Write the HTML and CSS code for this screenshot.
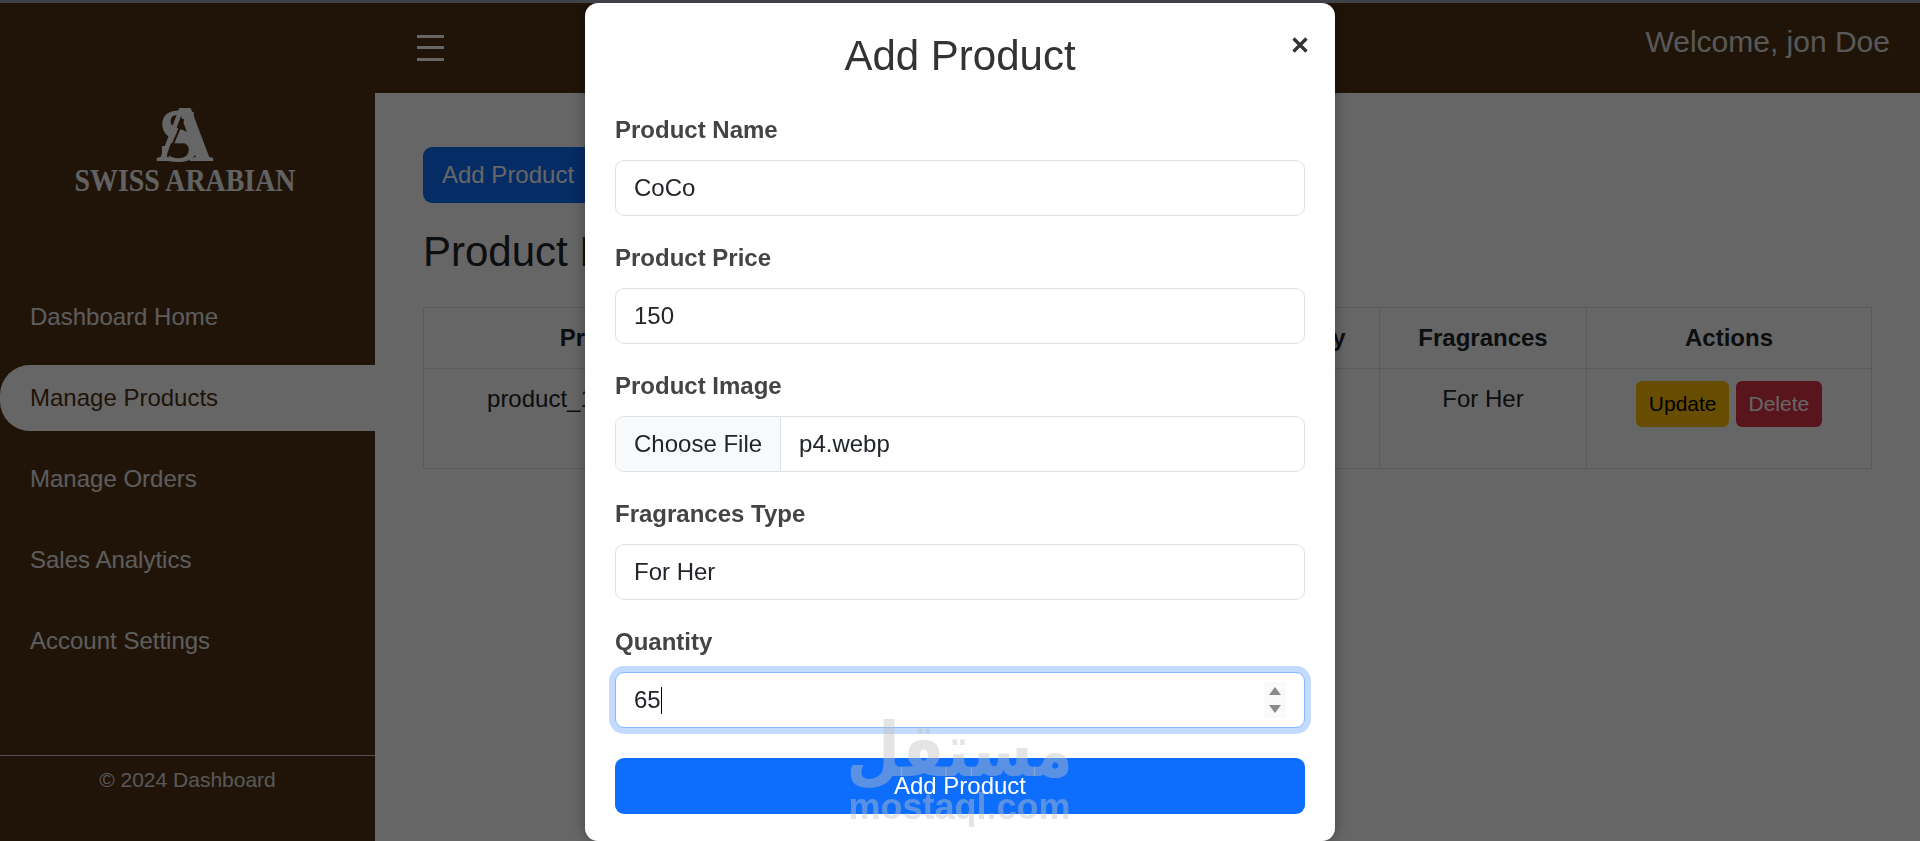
FILE: index.html
```html
<!DOCTYPE html>
<html lang="en">
<head>
<meta charset="utf-8">
<title>Manage Products</title>
<link rel="stylesheet" href="styles.css">
</head>
<body>
<div class="topstrip"></div>
<div class="shell">
  <aside class="sidebar">
    <div class="brand">
      <svg class="brand-logo" viewBox="0 0 240 92" width="240" height="92">
        <text class="mono mono-a" x="91" y="55">A</text>
        <text class="mono mono-s" x="93" y="54.5">S</text>
        <path class="mono-cut" d="M118.5 13 102.5 51"/>
        <text class="brand-name" x="120" y="85" text-anchor="middle" textLength="221" lengthAdjust="spacingAndGlyphs">SWISS ARABIAN</text>
      </svg>
    </div>
    <nav class="nav">
      <a class="nav-item">Dashboard Home</a>
      <a class="nav-item active">Manage Products</a>
      <a class="nav-item">Manage Orders</a>
      <a class="nav-item">Sales Analytics</a>
      <a class="nav-item">Account Settings</a>
    </nav>
    <footer class="side-foot">© 2024 Dashboard</footer>
  </aside>
  <div class="main">
    <header class="topbar">
      <svg class="burger" viewBox="0 0 27 26" width="27" height="26"><rect y="0" width="27" height="3"/><rect y="11" width="27" height="3"/><rect y="23" width="27" height="3"/></svg>
      <span class="welcome">Welcome, jon Doe</span>
    </header>
    <section class="content">
      <button class="btn btn-primary btn-add">Add Product</button>
      <h2 class="page-title">Product List</h2>
      <table class="table">
        <colgroup>
          <col class="c1"><col class="c2"><col class="c3"><col class="c4"><col class="c5"><col class="c6">
        </colgroup>
        <thead>
          <tr><th>Product ID</th><th>Name</th><th>Price</th><th>Quantity</th><th>Fragrances</th><th>Actions</th></tr>
        </thead>
        <tbody>
          <tr>
            <td>product_1732547281473</td><td>CoCo</td><td>150</td><td>65</td><td>For Her</td>
            <td><button class="btn-sm btn-warn">Update</button><button class="btn-sm btn-danger">Delete</button></td>
          </tr>
        </tbody>
      </table>
    </section>
  </div>
</div>
<div class="backdrop"></div>
<div class="modal-layer">
  <div class="modal">
    <button class="close" aria-label="Close"><svg viewBox="0 0 16 16" width="16" height="16"><path d="M1.5 1.5 14.5 14.5M14.5 1.5 1.5 14.5"/></svg></button>
    <h2 class="modal-title">Add Product</h2>
    <form class="form">
      <div class="field"><label class="label">Product Name</label><input class="input" value="CoCo"></div>
      <div class="field"><label class="label">Product Price</label><input class="input" value="150"></div>
      <div class="field"><label class="label">Product Image</label>
        <div class="input file"><span class="file-btn">Choose File</span><span class="file-name">p4.webp</span></div>
      </div>
      <div class="field"><label class="label">Fragrances Type</label><input class="input" value="For Her"></div>
      <div class="field"><label class="label">Quantity</label>
        <div class="input focus"><span>65</span><i class="caret"></i>
          <span class="spin"><i class="tri up"></i><i class="tri down"></i></span>
        </div>
      </div>
      <button type="button" class="btn btn-primary btn-submit"><span class="btn-label">Add Product</span></button>
    </form>
    <div class="watermark"><span class="wm-ar" lang="ar" dir="rtl">مستقل</span><span class="wm-en">mostaql.com</span></div>
  </div>
</div>
</body>
</html>
```
FILE: styles.css
```css
* { box-sizing: border-box; }
html, body { margin: 0; height: 841px; overflow: hidden; }
body { font-family: "Liberation Sans", Arial, sans-serif; font-size: 24px; line-height: 36px; color: #212529; background: #fff; }

.topstrip { height: 3px; background: #3f4347; position: relative; z-index: 5; }
.shell { display: flex; height: 838px; }

.sidebar { width: 375px; flex: none; background: #503214; color: #fff; display: flex; flex-direction: column; }
.brand { height: 281px; padding: 103px 6px 0 0; display: flex; justify-content: center; align-items: flex-start; }
.brand-logo { display: block; overflow: visible; }
.mono { font-family: "Liberation Serif", serif; font-weight: 700; fill: #fff; }
.mono-s { font-size: 76px; }
.mono-a { font-size: 80px; }
.mono-cut { fill: none; stroke: #503214; stroke-width: 2; }
.brand-name { font-family: "Liberation Serif", serif; font-weight: 700; font-size: 31px; fill: #f4f4f4; }

.nav { display: flex; flex-direction: column; gap: 15px; }
.nav-item { display: block; height: 66px; line-height: 66px; padding-left: 30px; color: #e8e8e8; }
.nav-item.active { background: #fff; color: #503214; border-radius: 30px 0 0 30px; }

.side-foot { margin-top: auto; height: 86px; border-top: 1px solid #ccc; padding-top: 8px; text-align: center; font-size: 21px; line-height: 32px; color: #ddd; }

.main { flex: 1; display: flex; flex-direction: column; min-width: 0; }
.topbar { height: 90px; flex: none; background: #503214; display: flex; justify-content: space-between; align-items: flex-start; padding: 0 30px 0 42px; }
.burger { fill: #fff; margin-top: 32px; display: block; }
.welcome { font-size: 30px; line-height: 45px; margin-top: 16px; color: #ddd; }

.content { padding: 54px 49px 0 48px; }
.btn { display: block; font: inherit; border: 0; border-radius: 9px; cursor: pointer; }
.btn-primary { background: #0d6efd; color: #fff; }
.btn-add { height: 56px; padding: 0 19px; }
.page-title { font-size: 42px; line-height: 50px; font-weight: 400; margin: 24px 0 30px; color: #212529; }

.table { border-collapse: collapse; table-layout: fixed; width: 1448px; border: 1px solid #dee2e6; }
.c1 { width: 394px; } .c2 { width: 200px; } .c3 { width: 197px; } .c4 { width: 165px; } .c5 { width: 207px; } .c6 { width: 285px; }
.table th, .table td { border: 1px solid #dee2e6; padding: 12px; text-align: center; vertical-align: top; white-space: nowrap; overflow: hidden; }
.table tbody tr { height: 100px; }
.btn-sm { font: inherit; font-size: 21px; line-height: 31.5px; height: 46px; border: 0; border-radius: 6px; padding: 0 12.5px; }
.btn-warn { background: #ffc107; color: #000; margin-right: 7px; }
.btn-danger { background: #dc3545; color: #fff; }

.backdrop { position: fixed; inset: 3px 0 0 0; background: rgba(0,0,0,.6); z-index: 2; }
.modal-layer { position: fixed; inset: 3px 0 0 0; z-index: 3; display: flex; justify-content: center; }
.modal { position: relative; width: 750px; height: 838px; background: #fff; border-radius: 13px; padding: 28px 30px 0; box-shadow: 0 0 16px rgba(0,0,0,.35); }
.close { position: absolute; top: 33px; right: 26px; width: 18px; height: 18px; padding: 1px; border: 0; background: none; }
.close svg { display: block; fill: none; stroke: #333; stroke-width: 3.3; }
.modal-title { margin: 0 0 31px; font-size: 42px; line-height: 50px; font-weight: 400; text-align: center; color: #333; }

.form { display: flex; flex-direction: column; }
.field { margin-bottom: 24px; }
.label { display: block; font-weight: 700; color: #444; margin-bottom: 12px; line-height: 36px; }
.input { display: block; width: 100%; height: 56px; border: 1px solid #dee2e6; border-radius: 9px; padding: 0 18px; font: inherit; color: #212529; background: #fff; outline: 0; line-height: 54px; }
.input.file { display: flex; padding: 0; overflow: hidden; }
.file-btn { background: #f8f9fa; padding: 0 18px; border-right: 1px solid #dee2e6; }
.file-name { padding-left: 18px; }
.input.focus { position: relative; display: flex; align-items: center; border-color: #86b7fe; box-shadow: 0 0 0 6px #c2dbfe; }
.caret { display: block; width: 1.5px; height: 27px; background: #000; margin-left: 0; }
.spin { position: absolute; right: 18px; top: 9px; width: 22px; height: 36px; background: #fafafa; display: flex; flex-direction: column; align-items: center; justify-content: space-between; padding: 5px 0; }
.tri { display: block; width: 0; height: 0; border-left: 6px solid transparent; border-right: 6px solid transparent; }
.tri.up { border-bottom: 8px solid #8a8a8a; }
.tri.down { border-top: 8px solid #8a8a8a; }
.btn-submit { width: 100%; height: 56px; margin-top: 6px; text-align: center; }
.btn-label { position: relative; z-index: 2; }

.watermark { position: absolute; z-index: 1; left: 265px; top: 705px; width: 219px; display: flex; flex-direction: column; align-items: center; color: rgba(193,193,193,.43); pointer-events: none; }
.wm-ar { display: block; font-family: "DejaVu Sans", sans-serif; font-weight: 700; font-size: 62px; line-height: 80px; transform: scaleY(1.2); transform-origin: 50% 35%; }
.wm-en { font-weight: 700; font-size: 36px; line-height: 36px; margin-top: 1px; }
```
